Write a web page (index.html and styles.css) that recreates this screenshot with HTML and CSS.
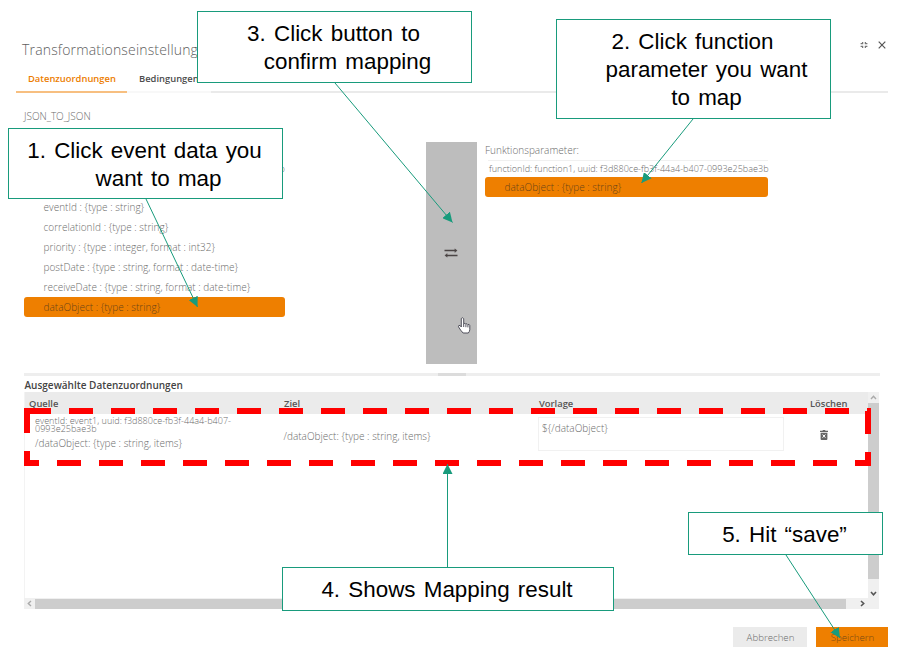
FILE: index.html
```html
<!DOCTYPE html>
<html lang="de">
<head>
<meta charset="utf-8">
<title>Transformationseinstellung</title>
<link rel="stylesheet" href="styles.css">
</head>
<body>
<main class="dialog">
  <header class="dialog-head">
    <h1>Transformationseinstellung</h1>
    <div class="window-tools">
      <svg width="8" height="8" viewBox="0 0 8 8" fill="none" stroke="#777" stroke-width="1.3"><path d="M.6 2.600H2.600V1M5.400 1V2.600H7.400M.6 5.400H2.600V7M5.400 7V5.400H7.400"/></svg>
      <svg width="8" height="8" viewBox="0 0 8 8" stroke="#555" stroke-width="1.2"><path d="M.7.7 7.3 7.3M7.3.7.7 7.3"/></svg>
    </div>
  </header>
  <nav class="tabs">
    <span class="tab active">Datenzuordnungen</span>
    <span class="tab">Bedingungen</span>
    <span class="tab-rest"></span>
  </nav>
  <section class="mapping">
    <div class="source">
      <div class="kind"><span>JSON_TO_JSON</span></div>
      <div class="uuid">eventId: event1, uuid: f3d880ce-fb3f-44a4-b407-0993e25bae3b</div>
      <ul class="fields">
        <li><span>eventId : {type : string}</span></li>
        <li><span>correlationId : {type : string}</span></li>
        <li><span>priority : {type : integer, format : int32}</span></li>
        <li><span>postDate : {type : string, format : date-time}</span></li>
        <li><span>receiveDate : {type : string, format : date-time}</span></li>
        <li class="selected"><span>dataObject : {type : string}</span></li>
      </ul>
    </div>
    <div class="map-button">
      <svg width="14" height="10" viewBox="0 0 14 10" stroke="#4a4444" stroke-width="1.5" fill="#4a4444"><path d="M.5 2.6H11M3 7.4H13.5" fill="none"/><path d="M10.8.8 13.2 2.6 10.8 4.4ZM3.2 5.6.8 7.4 3.2 9.2Z" stroke-width=".3"/></svg>
    </div>
    <div class="target">
      <div class="label"><span>Funktionsparameter:</span></div>
      <div class="uuid">functionId: function1, uuid: f3d880ce-fb3f-44a4-b407-0993e25bae3b</div>
      <ul class="fields">
        <li class="selected"><span>dataObject : {type : string}</span></li>
      </ul>
    </div>
  </section>
  <div class="splitter"><i></i></div>
  <h2>Ausgewählte Datenzuordnungen</h2>
  <section class="grid-box">
    <div class="grid-main">
      <div class="row head"><span>Quelle</span><span>Ziel</span><span>Vorlage</span><span>Löschen</span></div>
      <div class="row body">
        <div class="cell-source"><small>eventId: event1, uuid: f3d880ce-fb3f-44a4-b407-<br>0993e25bae3b</small><p>/dataObject: {type : string, items}</p></div>
        <div class="cell-target">/dataObject: {type : string, items}</div>
        <div class="template">${/dataObject}</div>
        <div class="cell-delete">
          <svg width="8" height="10" viewBox="0 0 8 10"><path d="M0 .8H2.4L3 0H5L5.6.8H8V2H0ZM.6 2.8H7.4V9Q7.4 10 6.4 10H1.6Q.6 10 .6 9Z" fill="#666"/><path d="M2.6 4.5 5.4 7.7M5.4 4.5 2.6 7.7" stroke="#fff" stroke-width="1"/></svg>
        </div>
      </div>
    </div>
    <div class="vscroll">
      <svg width="7" height="5" viewBox="0 0 7 5" fill="none" stroke="#aaa" stroke-width="1.4"><path d="M1 4 3.5 1.3 6 4"/></svg>
      <i></i>
      <svg width="7" height="5" viewBox="0 0 7 5" fill="none" stroke="#555" stroke-width="1.6"><path d="M1 1 3.5 3.7 6 1"/></svg>
    </div>
    <div class="hscroll">
      <svg width="5" height="7" viewBox="0 0 5 7" fill="none" stroke="#aaa" stroke-width="1.4"><path d="M4 1 1.3 3.5 4 6"/></svg>
      <i></i>
      <svg width="5" height="7" viewBox="0 0 5 7" fill="none" stroke="#555" stroke-width="1.6"><path d="M1 1 3.7 3.5 1 6"/></svg>
    </div>
  </section>
  <footer>
    <button class="btn">Abbrechen</button>
    <button class="btn primary">Speichern</button>
  </footer>
</main>

<div class="callout c1">1. Click event data you<br>want to map</div>
<div class="callout c2">2. Click function<br>parameter you want<br>to map</div>
<div class="callout c3">3. Click button to<br>confirm mapping</div>
<div class="callout c4">4. Shows Mapping result</div>
<div class="callout c5">5. Hit “save”</div>

<svg class="annotations" width="913" height="655" viewBox="0 0 913 655">
  <defs>
    <marker id="head" markerUnits="userSpaceOnUse" markerWidth="11" markerHeight="10" refX="10" refY="5" orient="auto"><path d="M0 0 10 5 0 10Z" fill="#189b7c"/></marker>
  </defs>
  <g fill="none" stroke="red" stroke-width="6">
    <path d="M27 411H866" stroke-dasharray="24 18"/>
    <path d="M24 463H871" stroke-dasharray="24 18" stroke-dashoffset="9"/>
    <path d="M27 408V433M27 451V466M868 411V434M868 452V466M24 411H28M867 411H871"/>
  </g>
  <g fill="none" stroke="#189b7c" stroke-width="1">
    <path d="M146 199 197.500 307" marker-end="url(#head)"/>
    <path d="M693 119 641.500 183" marker-end="url(#head)"/>
    <path d="M335 83 452.500 222.500" marker-end="url(#head)"/>
    <path d="M447.500 567V464" marker-end="url(#head)"/>
    <path d="M786 555 840 638" marker-end="url(#head)"/>
  </g>
  <path transform="translate(-1 0)" d="M462.300 318.500q1.400-1.600 2.400.2v5.200q1.200-1.300 2.200.3 1.200-1.200 2 .5 1.500-.9 1.900.9v4.200q-.3 2-1.500 3.200h-5.200q-2.500-2.500-4.600-6.200-.2-1.900 1.600-1.300l1.200 1.500ZM464.700 324v3M466.900 324.500v2.700M468.900 325v2.400" fill="#fff" stroke="#3f3f4c" stroke-width=".9" stroke-linejoin="round"/>
</svg>
</body>
</html>
```
FILE: styles.css
```css
* { box-sizing: border-box; }
body {
  margin: 0;
  position: relative;
  width: 913px;
  height: 655px;
  overflow: hidden;
  background: #fff;
  color: #6c6c6c;
  font: 300 10px/20px "Open Sans", sans-serif;
}
h1, h2, p, ul { margin: 0; padding: 0; list-style: none; }
svg { display: block; flex: none; }
.dialog { padding: 36px 25px 0 16px; height: 655px; }

.dialog-head { display: flex; justify-content: space-between; height: 30px; padding-left: 6px; }
h1 { font-size: 14px; line-height: 27px; font-weight: 300; letter-spacing: .17px; color: #606060; }
.window-tools { display: flex; gap: 10px; padding: 5px 2px 0 0; }

.tabs { display: flex; height: 27px; font-size: 9.4px; font-weight: 600; line-height: 25px; color: #4c4c4c; }
.tab { width: 84px; padding-left: 12px; border-bottom: 2px solid #f8f8f8; white-space: nowrap; }
.tab.active { width: 111px; color: #ec7d00; border-color: #f7bf80; }
.tab-rest { flex: 1; border-bottom: 2px solid #eaeaea; }

.mapping { display: grid; grid-template-columns: 402px 59px 283px; padding-left: 8px; height: 280px; }
.source { width: 261px; }
.kind { height: 66px; padding-top: 13px; }
.uuid { height: 18px; line-height: 20px; font-size: 9.05px; white-space: nowrap; padding-left: 4px; }
.source .uuid { display: flex; justify-content: flex-end; }
.source .fields { padding-top: 20px; }
.fields li { height: 20px; padding-left: 19.5px; white-space: nowrap; letter-spacing: .02px; }
.fields .selected { background: #ee7f00; border-radius: 3px; color: #6b4418; }
.map-button { width: 51px; height: 222px; margin-top: 49px; padding-right: 2px; background: #bdbdbd; display: flex; align-items: center; justify-content: center; }
.target { padding-top: 47px; }
.target .label { height: 20px; letter-spacing: .02px; }
.target .uuid { margin-left: 3px; padding-left: 1px; height: 16px; line-height: 15px; border-top: 1px solid #f0f0f0; }
.target .fields { padding-top: 1px; }

.splitter { height: 3px; margin: 0 8px; background: #eee; display: flex; justify-content: center; }
.splitter i { width: 28px; height: 3px; background: #dcdcdc; }
h2 { height: 16px; padding-left: 8.5px; font-size: 10px; line-height: 18px; font-weight: 600; color: #444; }

.grid-box { display: grid; grid-template: 206px 11px / 844px 11px; margin-left: 8px; width: 855px; }
.grid-main { border-left: 1px solid #f3f3f3; }
.row { display: grid; grid-template-columns: 254px 259px 271px 59px; }
.head { height: 22px; background: #ebebeb; font-size: 9.4px; line-height: 23px; font-weight: 600; color: #555; }
.head span { padding-left: 5px; }
.head span:first-child { padding-left: 4px; }
.head span:nth-child(3) { padding-left: 1px; }
.head span:nth-child(4) { padding-left: 1px; }
.body { grid-template-columns: 254px 259px 246px 85px; height: 44px; letter-spacing: .02px; }
.cell-source { padding: 3px 0 0 10px; }
.cell-source small { display: block; font-size: 9.05px; line-height: 8px; letter-spacing: 0; white-space: nowrap; }
.cell-source p { line-height: 12px; padding-top: 4px; }
.cell-target { padding: 12px 0 0 4.5px; }
.template { height: 34px; margin-top: 3px; border: 1px solid #f1f1f1; padding-left: 3px; line-height: 21px; }
.cell-delete { padding: 16px 0 0 36px; }
.vscroll { background: #f0f0f0; display: flex; flex-direction: column; align-items: center; padding-top: 3px; }
.vscroll i { width: 11px; height: 176px; margin: 3px 0 12px; background: #cdcdcd; }
.hscroll { grid-column: 1 / 3; background: #f0f0f0; display: flex; align-items: center; padding-left: 3px; }
.hscroll i { width: 811px; height: 10px; margin: 0 14px 0 3px; background: #cdcdcd; }

footer { display: flex; justify-content: flex-end; gap: 9px; margin-top: 18px; }
.btn { width: 74px; height: 20px; padding: 1px 0 0 1px; border: 0; background: #ebebeb; color: #6c6c6c; font: inherit; font-size: 9.7px; line-height: 19px; }
.primary { width: 72px; background: #ee7f00; color: #784a14; }

.annotations { position: absolute; left: 0; top: 0; }
.callout {
  position: absolute;
  padding: 8px 0 0 26px;
  border: 1px solid #189b7c;
  background: #fff;
  color: #000;
  text-align: center;
  text-indent: -28px;
  white-space: nowrap;
  font: 400 22.4px/28px "Liberation Sans", sans-serif;
  word-spacing: 2px;
}
.c1 { left: 8px; top: 128px; width: 275px; height: 71px; }
.c2 { left: 556px; top: 19px; width: 275px; height: 100px; }
.c3 { left: 197px; top: 11px; width: 275px; height: 72px; }
.c4 { left: 282px; top: 567px; width: 332px; height: 44px; }
.c5 { left: 688px; top: 512px; width: 195px; height: 43px; }
```
